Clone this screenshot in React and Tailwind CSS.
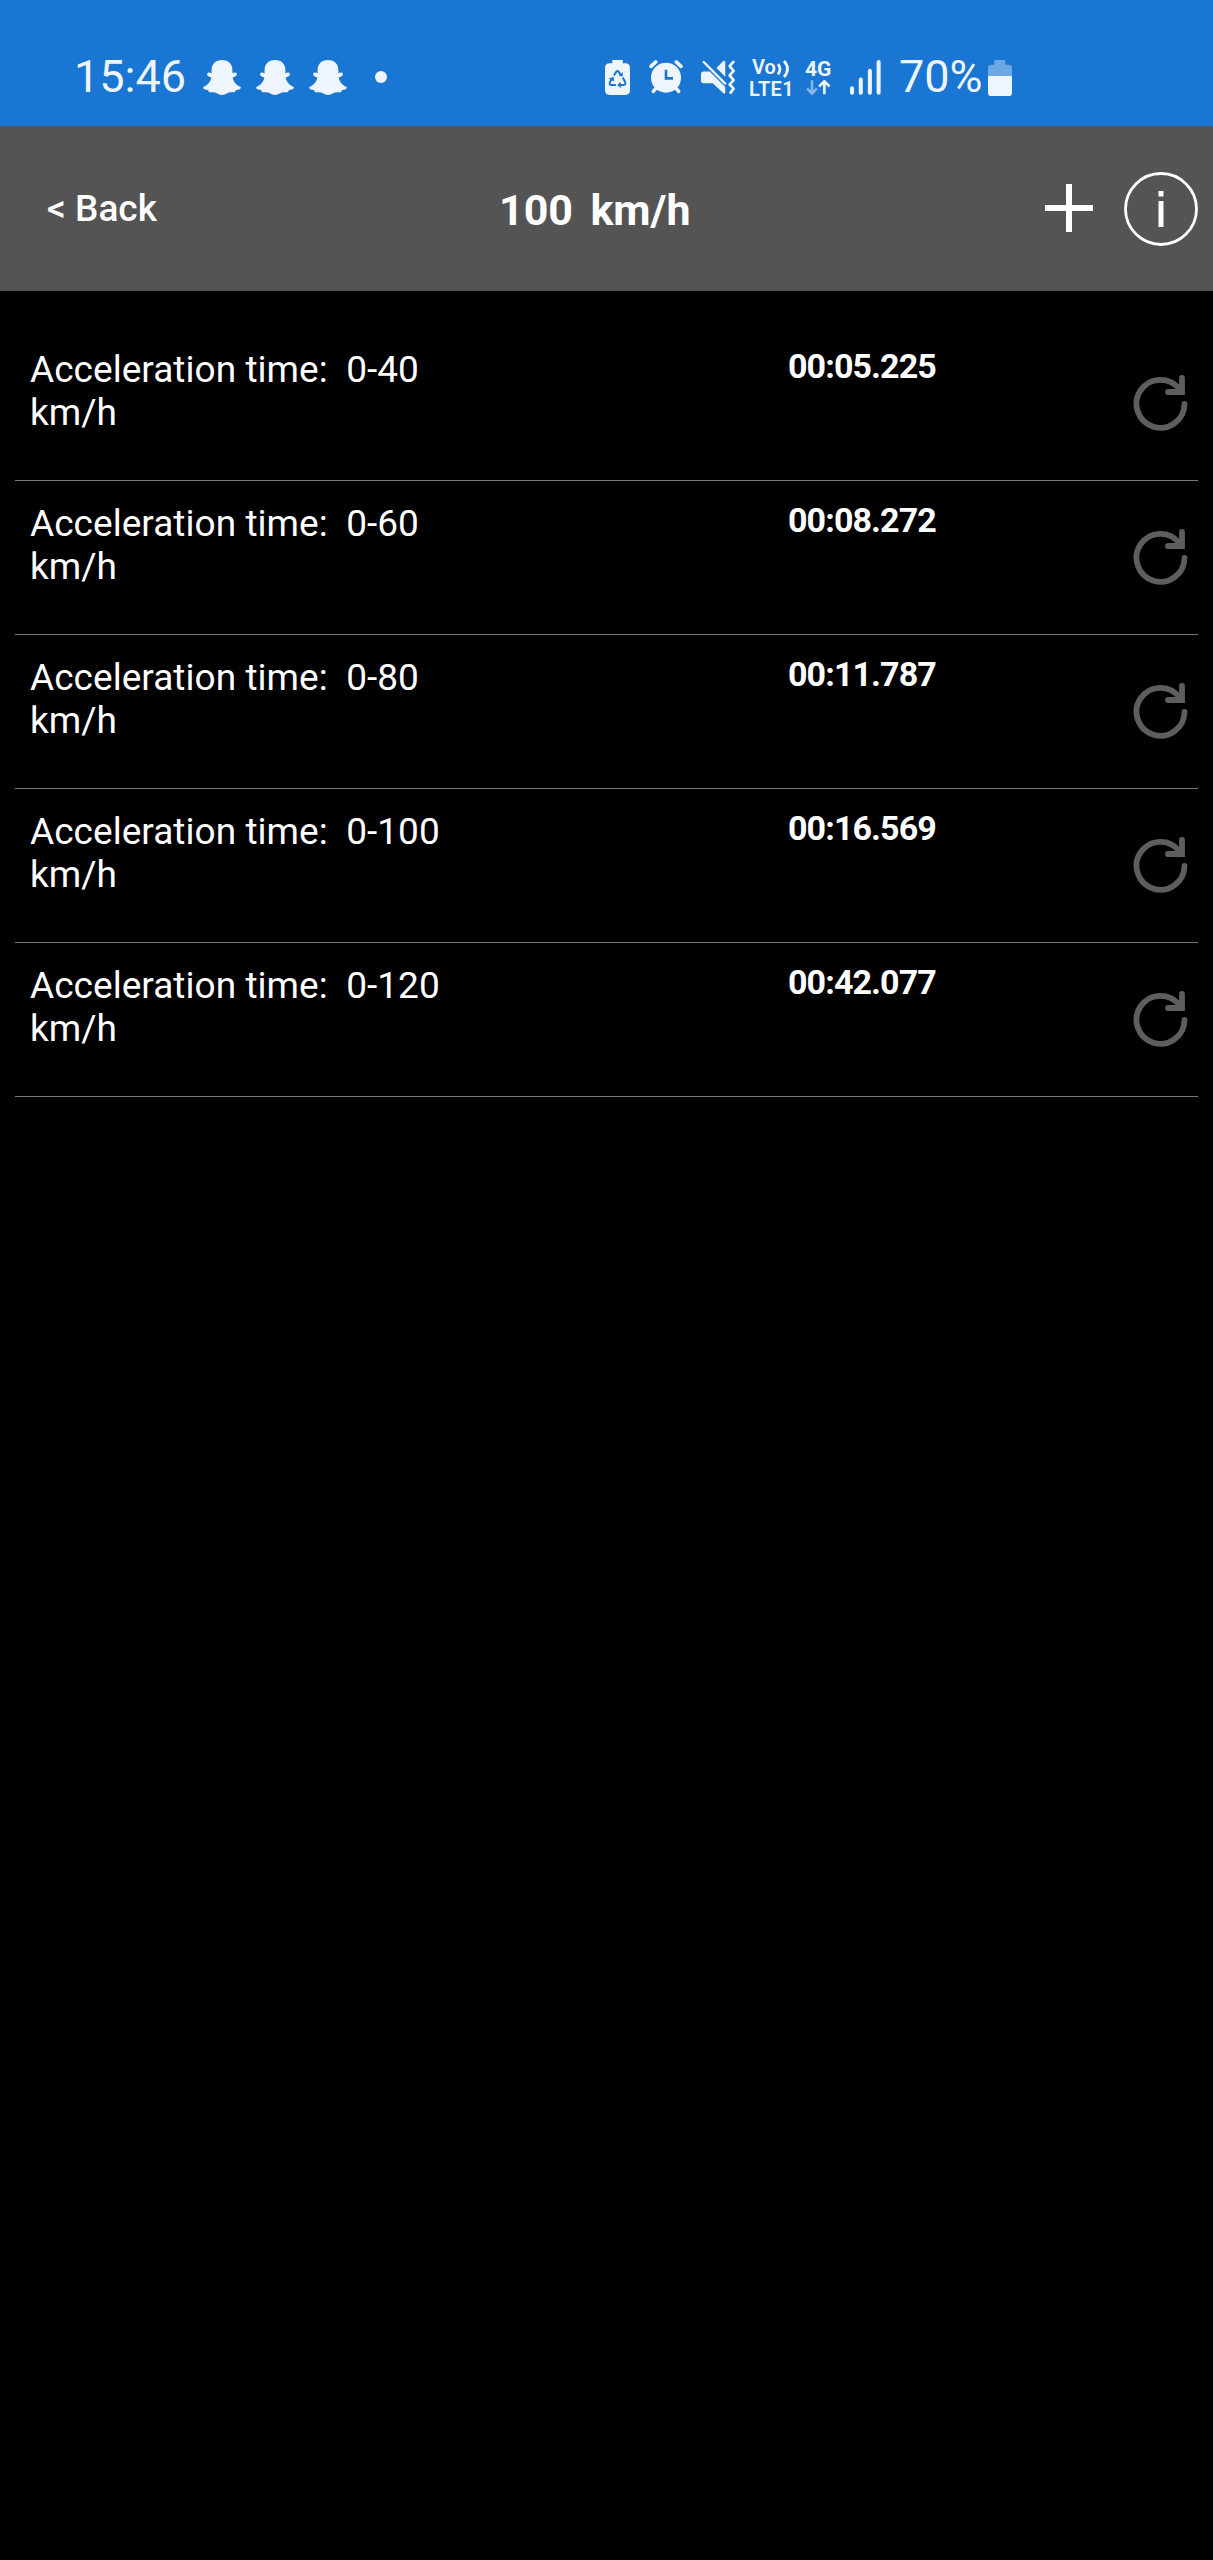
const runs = [
  { range: "0-40", time: "00:05.225" },
  { range: "0-60", time: "00:08.272" },
  { range: "0-80", time: "00:11.787" },
  { range: "0-100", time: "00:16.569" },
  { range: "0-120", time: "00:42.077" },
];

function GhostIcon() {
  return (
    <svg viewBox="0 0 115 106" className="w-[38px] h-[35px]" fill="currentColor">
      <path d="M57.500 0C38 0 26 12 26 30V40C20 37 13 37 12 43C12 48 19 51 25 53C24 66 12 77 1 82C-1 88 7 90 15 91C17 96 18 98 23 98C30 97 36 97 42 101C48 105 52 106 57.500 106C63 106 67 105 73 101C79 97 85 97 92 98C97 98 98 96 100 91C108 90 116 88 114 82C103 77 91 66 90 53C96 51 103 48 103 43C102 37 95 37 89 40V30C89 12 77 0 57.500 0Z" />
    </svg>
  );
}

function RecycleBatteryIcon() {
  return (
    <svg viewBox="0 0 76 106" className="w-[25px] h-[35px]">
      <path d="M22 0H54V10H62Q76 10 76 24V92Q76 106 62 106H14Q0 106 0 92V24Q0 10 14 10H22Z" fill="currentColor" />
      <g fill="none" stroke="#1976d2" strokeWidth="6">
        <path d="M27 47L34 36Q38 31 42 36L49 47" />
        <path d="M54 53L61 66Q64 75 56 76H43" />
        <path d="M33 76H20Q12 75 15 67L22 55" />
      </g>
      <path d="M41 49H54V36ZM48 67V85L37 76ZM11 57L26 51L28 65Z" fill="#1976d2" />
    </svg>
  );
}

function AlarmIcon() {
  return (
    <svg viewBox="0 0 102 102" className="w-[34px] h-[34px]" fill="none" stroke="currentColor" strokeLinecap="round">
      <path d="M6 19L20 6M96 19L82 6" strokeWidth="11" />
      <path d="M20 86L13 94M82 86L89 94" strokeWidth="11" />
      <circle cx="51" cy="53" r="45" fill="currentColor" stroke="none" />
      <path d="M51 29V55H72" stroke="#1976d2" strokeWidth="8" strokeLinecap="butt" />
    </svg>
  );
}

function MuteVibrateIcon() {
  return (
    <svg viewBox="0 0 104 104" className="w-[35px] h-[35px]">
      <path d="M46 24L66 3Q72 0 72 7V50Z" fill="currentColor" />
      <path d="M8 34H26L72 80V96Q72 103 66 98L35 69H8Q0 69 0 61V42Q0 34 8 34Z" fill="currentColor" />
      <path d="M8 6L72 70" stroke="currentColor" strokeWidth="7" strokeLinecap="round" />
      <path d="M96 6L85 18L97 32L85 46L97 60L85 73L97 85L88 97" fill="none" stroke="currentColor" strokeWidth="8" strokeLinecap="round" strokeLinejoin="round" />
    </svg>
  );
}

function SignalIcon() {
  return (
    <svg viewBox="0 0 92 104" className="w-[31px] h-[35px]" stroke="currentColor" strokeWidth="12" strokeLinecap="round">
      <path d="M6 84V97M32 58V97M59 32V97M85 6V97" />
    </svg>
  );
}

function BatteryIcon() {
  return (
    <svg viewBox="0 0 72 108" className="w-6 h-9" fill="currentColor">
      <path d="M19 4Q19 0 23 0H48Q52 0 52 4V14H62Q72 14 72 24V48H0V24Q0 14 10 14H19Z" opacity="0.4" />
      <path d="M0 48H72V98Q72 108 62 108H10Q0 108 0 98Z" />
    </svg>
  );
}

function StatusBar() {
  return (
    <div className="flex h-[126px] items-start bg-[#1976d2] pl-[74px] pt-[60px] text-[#eef5ff]">
      <span className="-mt-[7px] w-[129px] text-[45px] leading-[48px]">15:46</span>
      <div className="flex w-[172px] gap-[15px]">
        <GhostIcon />
        <GhostIcon />
        <GhostIcon />
      </div>
      <div className="mt-[11px] h-3 w-3 rounded-full bg-[#eef5ff]" />
      <div className="ml-[218px] w-[44px]">
        <RecycleBatteryIcon />
      </div>
      <div className="w-[52px]">
        <AlarmIcon />
      </div>
      <div className="w-[48px]">
        <MuteVibrateIcon />
      </div>
      <div className="w-[56px] text-[20px] font-semibold leading-[20px]">
        <div className="flex h-[19px] pl-[3px]">
          <span className="-mt-[3px]">Vo</span>
          <svg viewBox="0 0 15 20" className="h-5 w-[15px]" fill="none" stroke="currentColor" strokeWidth="2.800">
            <path d="M2 4Q6 9 2 14.500M8 1Q15 9 8 17" />
          </svg>
        </div>
        <span className="block tracking-[0.4px]">LTE1</span>
      </div>
      <div className="w-[45px]">
        <div className="-mt-[2px] h-[22px] text-[21px] font-bold leading-[22px]">4G</div>
        <svg viewBox="0 0 76 46" className="ml-px h-[15px] w-[25px]" fill="none" stroke="currentColor" strokeWidth="8">
          <path d="M18 1V42M3 26L18 42L33 26" opacity="0.5" />
          <path d="M56 44V4M40 20L56 4L72 20" />
        </svg>
      </div>
      <div className="w-[49px]">
        <SignalIcon />
      </div>
      <span className="-mt-[7px] w-[89px] text-[45px] leading-[48px]">70%</span>
      <BatteryIcon />
    </div>
  );
}

function Header() {
  return (
    <header className="flex h-[165px] items-center bg-[#545454] text-white">
      <button className="w-[499px] pl-[47px] pt-px text-left text-[37px] font-medium leading-[44px]">&lt; Back</button>
      <h1 className="w-[546px] whitespace-pre pt-[3px] text-[43px] font-bold leading-[50px] [word-spacing:-2px]">100  km/h</h1>
      <svg viewBox="0 0 48 48" className="mb-px h-12 w-12 shrink-0" stroke="currentColor" strokeWidth="6">
        <path d="M24 0V48M0 24H48" />
      </svg>
      <svg viewBox="0 0 74 74" className="ml-[31px] h-[74px] w-[74px] shrink-0" fill="none" stroke="currentColor">
        <circle cx="37" cy="37" r="35.500" strokeWidth="2.800" />
        <path d="M37 19V24.500M37 29V55" strokeWidth="5" />
      </svg>
    </header>
  );
}

function ReloadIcon() {
  return (
    <svg viewBox="0 0 56 56" className="h-14 w-14" fill="none" stroke="#5e5e5e" strokeWidth="5.800" strokeLinecap="round">
      <path d="M51.500 29A24 24 0 1 1 46 13.500" />
      <path d="M49 3V17H35" strokeLinejoin="miter" />
    </svg>
  );
}

function RunRow({ range, time }) {
  return (
    <li className="flex h-[154px] border-b border-[#777] pl-[15px]">
      <p className="w-[758px] pt-[21px] text-[37px] leading-[43px] tracking-[0.04px]">
        <span className="whitespace-pre">Acceleration time:  {range}</span>
        <br />
        km/h
      </p>
      <span className="w-[345px] pt-[19px] text-[34px] font-bold leading-[40px] tracking-[-0.9px]">{time}</span>
      <div className="shrink-0 pt-[48px]">
        <ReloadIcon />
      </div>
    </li>
  );
}

export default function App() {
  return (
    <div className="min-h-[2560px] w-[1213px] overflow-hidden bg-black font-['Roboto',sans-serif] text-white">
      <StatusBar />
      <Header />
      <ul className="mx-[15px] pt-9">
        {runs.map((run) => (
          <RunRow key={run.range} range={run.range} time={run.time} />
        ))}
      </ul>
    </div>
  );
}
